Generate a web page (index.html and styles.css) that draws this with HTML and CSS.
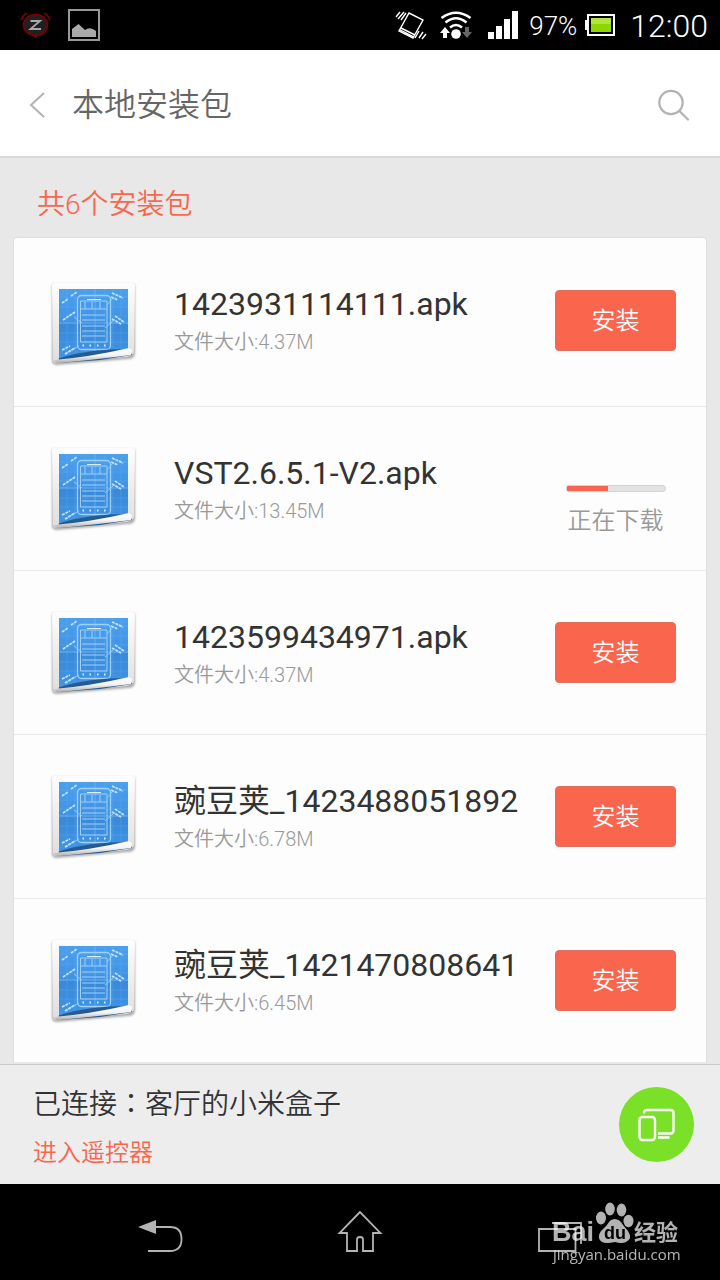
FILE: index.html
```html
<!DOCTYPE html>
<html lang="zh-CN">
<head>
<meta charset="utf-8">
<meta name="viewport" content="width=device-width, initial-scale=1">
<title>本地安装包</title>
<link rel="stylesheet" href="styles.css">
</head>
<body>
<svg class="defs" aria-hidden="true">
  <defs>
    <linearGradient id="blue" x1="0" y1="0" x2="0" y2="1"><stop offset="0" stop-color="#4ba0ee"/><stop offset=".5" stop-color="#3f92e2"/><stop offset=".52" stop-color="#3889d8"/><stop offset="1" stop-color="#4195e5"/></linearGradient>
    <linearGradient id="paper" x1="0" y1="0" x2="0" y2="1"><stop offset="0" stop-color="#fdfdfd"/><stop offset="1" stop-color="#dedede"/></linearGradient>
    <linearGradient id="curl" x1="0" y1="0" x2="0.1" y2="1"><stop offset="0" stop-color="#fff"/><stop offset=".55" stop-color="#f4f4f4"/><stop offset="1" stop-color="#aaa"/></linearGradient>
    <filter id="soft" x="-10%" y="-10%" width="120%" height="120%"><feGaussianBlur stdDeviation="1"/></filter>
  </defs>
  <symbol id="apk" viewBox="0 0 110 110">
    <path d="M14 15H93Q95 15 95 18V84Q95 90 88 90L17 96Q12 96 12 92V18Q12 15 14 15Z" fill="#777" opacity=".6" filter="url(#soft)"/>
    <path d="M15 14H92Q95 14 95 17L94 83Q93 87 86 88L18 94Q13 95 13 90L12 17Q12 14 15 14Z" fill="url(#paper)"/>
    <path d="M19 20H88V80Q64 82 19 89Z" fill="url(#blue)"/>
    <path d="M27 20V87M35 20V86M45 20V85M65 20V82M73 20V81M81 20V80M19 28H88M19 38H88M19 47H88M19 64H88M19 73H88" stroke="#65b2f3" stroke-width=".5" opacity=".55"/>
    <path d="M55 20V84M19 54H88" stroke="#7cbcf4" stroke-width="1" opacity=".6"/>
    <g fill="none" stroke="#9fd0fa" stroke-width="1">
      <rect x="37.500" y="26.500" width="33" height="54" rx="4" stroke-width="1.300"/>
      <path d="M40.500 32H67V73H40.500ZM40 40H67M42 46H65M42 51H65M42 57H65M42 62H65M42 67H65M45 33V40M52 33V40M60 33V40"/>
      <path d="M47 30.500H61" stroke="#d8eeff"/>
      <path d="M67 36L73 29M34 48L42 54M65 59L73 52M28 83L39 77" stroke-width=".8"/>
    </g>
    <path d="M42.500 76.500H44M49.500 76.500H51M57 76.500H58.500M64 76.500H65.500" stroke="#d8eeff" stroke-width="2"/>
    <g fill="none" stroke="#c4e4fd" stroke-width="1.700" stroke-dasharray="3 .8"><path d="M22 34L28 30M31 27L37 23M23 51L35 43M72 24L83 29M71 28L78 31M75 47L84 53M72 50L81 55M22 81L30 77M25 85L35 79"/></g>
    <path d="M19 89Q49 80 88 80L90 79L92 86L60 91L18 94Z" fill="#245b91"/>
    <path d="M14 91Q50 88 89 79Q92 79 92 83L91 86Q60 90 20 94Q15 95 14 91Z" fill="url(#curl)"/>
  </symbol>
</svg>
<div class="screen">
  <div class="status">
    <svg width="31" height="31" viewBox="0 0 31 31" aria-label="闹钟"><ellipse cx="15.500" cy="15" rx="12" ry="10.500" fill="#202020" stroke="#7d0000" stroke-width="1.700"/><path d="M13 25.500L15.500 28L18 25.500Z" fill="#8a0000"/><path d="M1 10Q3 5 7 3M30 10Q28 5 24 3" fill="none" stroke="#7d0000" stroke-width="1.700"/><path d="M10.500 11H20L10.500 19H21" fill="none" stroke="#aaa" stroke-width="1.800"/></svg>
    <svg class="photo" width="32" height="32" viewBox="0 0 32 32" aria-label="图片"><path d="M1 1H31V31H1Z" fill="none" stroke="#999" stroke-width="2"/><path d="M4 20L10.500 15L17 21Q22 17 28 22V28H4Z" fill="#aaa"/></svg>
    <svg class="push" width="32" height="32" viewBox="393 9 32 32" fill="none" stroke="#fff" stroke-width="1.400" aria-label="振动"><path d="M407 13L421 20L411 38L397 31ZM399 28L413 35M397.500 29.500L412 37M394 17L398 12M396 19L402 12M399 20L404 13M413 38L417 31M417 38L421 32M420 39L424 34"/></svg>
    <svg class="wifi" width="32" height="32" viewBox="438 9 32 32" aria-label="无线网络"><g fill="none" stroke="#fff" stroke-width="2.600"><path d="M439.500 18Q454 7.500 468.500 18M443.500 22.500Q454 14 464.500 22.500M448 27.500Q454 22.500 460 27.500"/></g><circle cx="454" cy="34" r="4.800" fill="#fff"/><path d="M443 27L448 33H445V38H441V33H438Z" fill="#fff"/><path d="M463 27H467V32H470L465 38L460 32H463Z" fill="#666"/></svg>
    <svg class="signal" width="30" height="28" viewBox="0 0 30 28" fill="#fff" aria-label="信号"><path d="M0 21H6V28H0ZM8 15H14V28H8ZM16 8H22V28H16ZM24 0H30V28H24Z"/></svg>
    <span class="percent">97%</span>
    <svg width="30" height="22" viewBox="0 0 30 22" aria-label="电池"><path d="M0 6H3V16H0Z" fill="#fff"/><rect x="3" y="1" width="26" height="20" fill="#000" stroke="#fff" stroke-width="2"/><path d="M6 4H26V18H6Z" fill="#8fd600"/><path d="M6 4H26V10H6Z" fill="#b3e63c"/></svg>
    <time class="clock">12:00</time>
  </div>
  <header class="header">
    <button class="icon-button" aria-label="返回"><svg width="20" height="28" viewBox="0 0 20 28" fill="none" stroke="#b2b2b2" stroke-width="2"><path d="M16 2L3 14L16 26"/></svg></button>
    <h1>本地安装包</h1>
    <button class="icon-button" aria-label="搜索"><svg width="32" height="32" viewBox="0 0 32 32" fill="none" stroke="#b2b2b2" stroke-width="2.200"><circle cx="13" cy="13.500" r="11.700"/><path d="M21.500 22L30 30.500" stroke-linecap="round"/></svg></button>
  </header>
  <main class="main">
    <h2>共6个安装包</h2>
    <ul class="card">
      <li class="row"><svg class="apk"><use href="#apk"/></svg><div class="info"><h3>1423931114111.apk</h3><p>文件大小:4.37M</p></div><button class="install">安装</button></li>
      <li class="row"><svg class="apk"><use href="#apk"/></svg><div class="info"><h3>VST2.6.5.1-V2.apk</h3><p>文件大小:13.45M</p></div><div class="download"><progress id="dl" max="100" value="42"></progress><label for="dl">正在下载</label></div></li>
      <li class="row"><svg class="apk"><use href="#apk"/></svg><div class="info"><h3>1423599434971.apk</h3><p>文件大小:4.37M</p></div><button class="install">安装</button></li>
      <li class="row"><svg class="apk"><use href="#apk"/></svg><div class="info"><h3>豌豆荚_1423488051892</h3><p>文件大小:6.78M</p></div><button class="install">安装</button></li>
      <li class="row"><svg class="apk"><use href="#apk"/></svg><div class="info"><h3>豌豆荚_1421470808641</h3><p>文件大小:6.45M</p></div><button class="install">安装</button></li>
    </ul>
  </main>
  <footer class="device">
    <div>
      <p>已连接<span class="colon" lang="zh-TW">：</span>客厅的小米盒子</p>
      <a href="#remote">进入遥控器</a>
    </div>
    <button class="cast" aria-label="切换设备"><svg width="38" height="34" viewBox="0 0 38 34" fill="none" stroke="#fff" stroke-width="2.400"><path d="M6 5.500V5Q6 2 9 2H32.500Q35.500 2 35.500 5V22Q35.500 25.500 32.500 25.500H20M20 29.500H31.500"/><rect x="1.500" y="9" width="15.500" height="23" rx="3"/></svg></button>
  </footer>
  <nav class="nav">
    <button aria-label="返回"><svg width="100" height="96" viewBox="110 1184 100 96"><path d="M138 1227L156 1220V1234Z" fill="#b3b3b3"/><path d="M155 1227H170Q181.500 1227 181.500 1239Q181.500 1251 170 1251H148" fill="none" stroke="#b3b3b3" stroke-width="1.800"/></svg></button>
    <button aria-label="主页"><svg width="100" height="96" viewBox="310 1184 100 96" fill="none" stroke="#b3b3b3" stroke-width="1.800"><path d="M360 1212L339.500 1233H347V1251H357V1239.500Q357 1237 360 1237T363 1239.500V1251H373V1233H380.500Z"/></svg></button>
    <button aria-label="最近任务"><svg width="100" height="96" viewBox="510 1184 100 96" fill="none" stroke="#b3b3b3" stroke-width="1.800"><path d="M539 1229H575.500V1251H539ZM552 1223H581V1244"/></svg></button>
    <svg class="watermark" width="140" height="72" viewBox="548 1200 140 72" fill="#fff">
      <text class="brand" x="552" y="1241">Bai</text>
      <g><ellipse cx="601" cy="1218" rx="5" ry="6.500"/><ellipse cx="610" cy="1209" rx="4.800" ry="6.500"/><ellipse cx="621.500" cy="1210" rx="4.800" ry="6.500"/><ellipse cx="628.500" cy="1221" rx="5" ry="6.200"/><path d="M614.500 1219Q620 1219 623 1225L628 1231Q633 1239 626 1242Q622 1244 615 1242Q606 1244 602 1242Q596 1238 601 1231L607 1225Q610 1219 614.500 1219Z"/></g>
      <text class="du" x="604" y="1239">du</text>
      <text class="exp" x="634" y="1240">经验</text>
      <text class="url" x="553" y="1260">jingyan.baidu.com</text>
    </svg>
  </nav>
</div>
</body>
</html>
```
FILE: styles.css
```css
* { box-sizing: border-box; margin: 0; padding: 0; }
body { font-family: Roboto, "Noto Sans CJK SC", sans-serif; font-weight: 350; background: #e8e8e8; color: #333; }
h1, h2, h3 { font-weight: 350; }
button { border: 0; background: none; font: inherit; cursor: pointer; }
svg { display: block; flex: none; }
.defs { position: absolute; width: 0; height: 0; }
.screen { display: flex; flex-direction: column; min-height: 100vh; }

.status { display: flex; align-items: center; height: 50px; padding: 0 12px 0 20px; background: #000; color: #fff; }
.photo { margin-left: 17px; }
.push { margin-left: auto; }
.wifi { margin-left: 13px; }
.signal { margin-left: 16px; }
.percent { margin: 2px 8px 0 11px; font-size: 26px; line-height: 50px; }
.clock { margin: 2px 0 0 15px; font-size: 32px; line-height: 50px; }

.header { display: flex; align-items: center; height: 108px; padding: 4px 30px 0 28px; background: #fff; border-bottom: 2px solid #d9d9d9; }
.header h1 { flex: 1; margin-left: 24px; font-size: 32px; line-height: 48px; color: #666; }
.icon-button { flex: none; }

.main { flex: 1; padding: 0 13px; }
.main h2 { padding: 27px 24px 12px; font-size: 28px; line-height: 40px; color: #f9664d; }
.card { list-style: none; background: #fdfdfd; border: 1px solid #dedede; border-bottom: 0; border-radius: 4px 4px 0 0; }
.row { display: flex; align-items: center; height: 164px; padding: 0 30px 0 26px; border-bottom: 1px solid #e9e9e9; }
.row:first-child { height: 169px; padding-bottom: 4px; }
.apk { width: 110px; height: 110px; }
.row:first-child .apk { margin-top: 8px; }
.info { flex: 1; min-width: 0; padding-left: 24px; }
.info h3 { font-size: 32px; font-weight: 400; line-height: 44px; white-space: nowrap; }
.info p { font-size: 20px; line-height: 32px; color: #999; }
.install { width: 121px; height: 61px; padding-bottom: 4px; border: 1px solid #df705e; border-radius: 4px; background: #f9664d; color: #fff; font-size: 24px; }
.download { display: flex; flex-direction: column; align-items: center; width: 121px; gap: 13px; padding-top: 45px; }
.download label { font-size: 24px; line-height: 32px; color: #999; }
progress { appearance: none; display: block; width: 100px; height: 7px; border: 0; border-radius: 3px; overflow: hidden; }
progress::-webkit-progress-bar { background: #e3e3e3; border: 1px solid #d3d3d3; border-radius: 3px; }
progress::-webkit-progress-value { background: #f9664d; }

.device { display: flex; align-items: center; justify-content: space-between; height: 120px; padding: 0 26px 0 33px; background: #ededed; border-top: 1px solid #c8c8c8; }
.device div { padding-top: 5px; }
.device p { font-size: 28px; line-height: 48px; }
.colon { font-family: "Noto Sans CJK TC", sans-serif; }
.device a { display: block; font-size: 24px; line-height: 48px; color: #f9664d; text-decoration: none; }
.cast { display: grid; place-items: center; width: 75px; height: 75px; border-radius: 50%; background: #7ae028; }

.nav { position: relative; display: flex; justify-content: center; gap: 100px; height: 96px; background: #000; }
.watermark { position: absolute; right: 32px; top: 16px; opacity: .7; pointer-events: none; }
.brand { font: bold 27px "Liberation Sans", sans-serif; }
.du { font: bold 18px "Liberation Sans", sans-serif; fill: #000; }
.exp { font: bold 22px "Noto Sans CJK SC", sans-serif; }
.url { font: 15px "Open Sans", sans-serif; }
```
